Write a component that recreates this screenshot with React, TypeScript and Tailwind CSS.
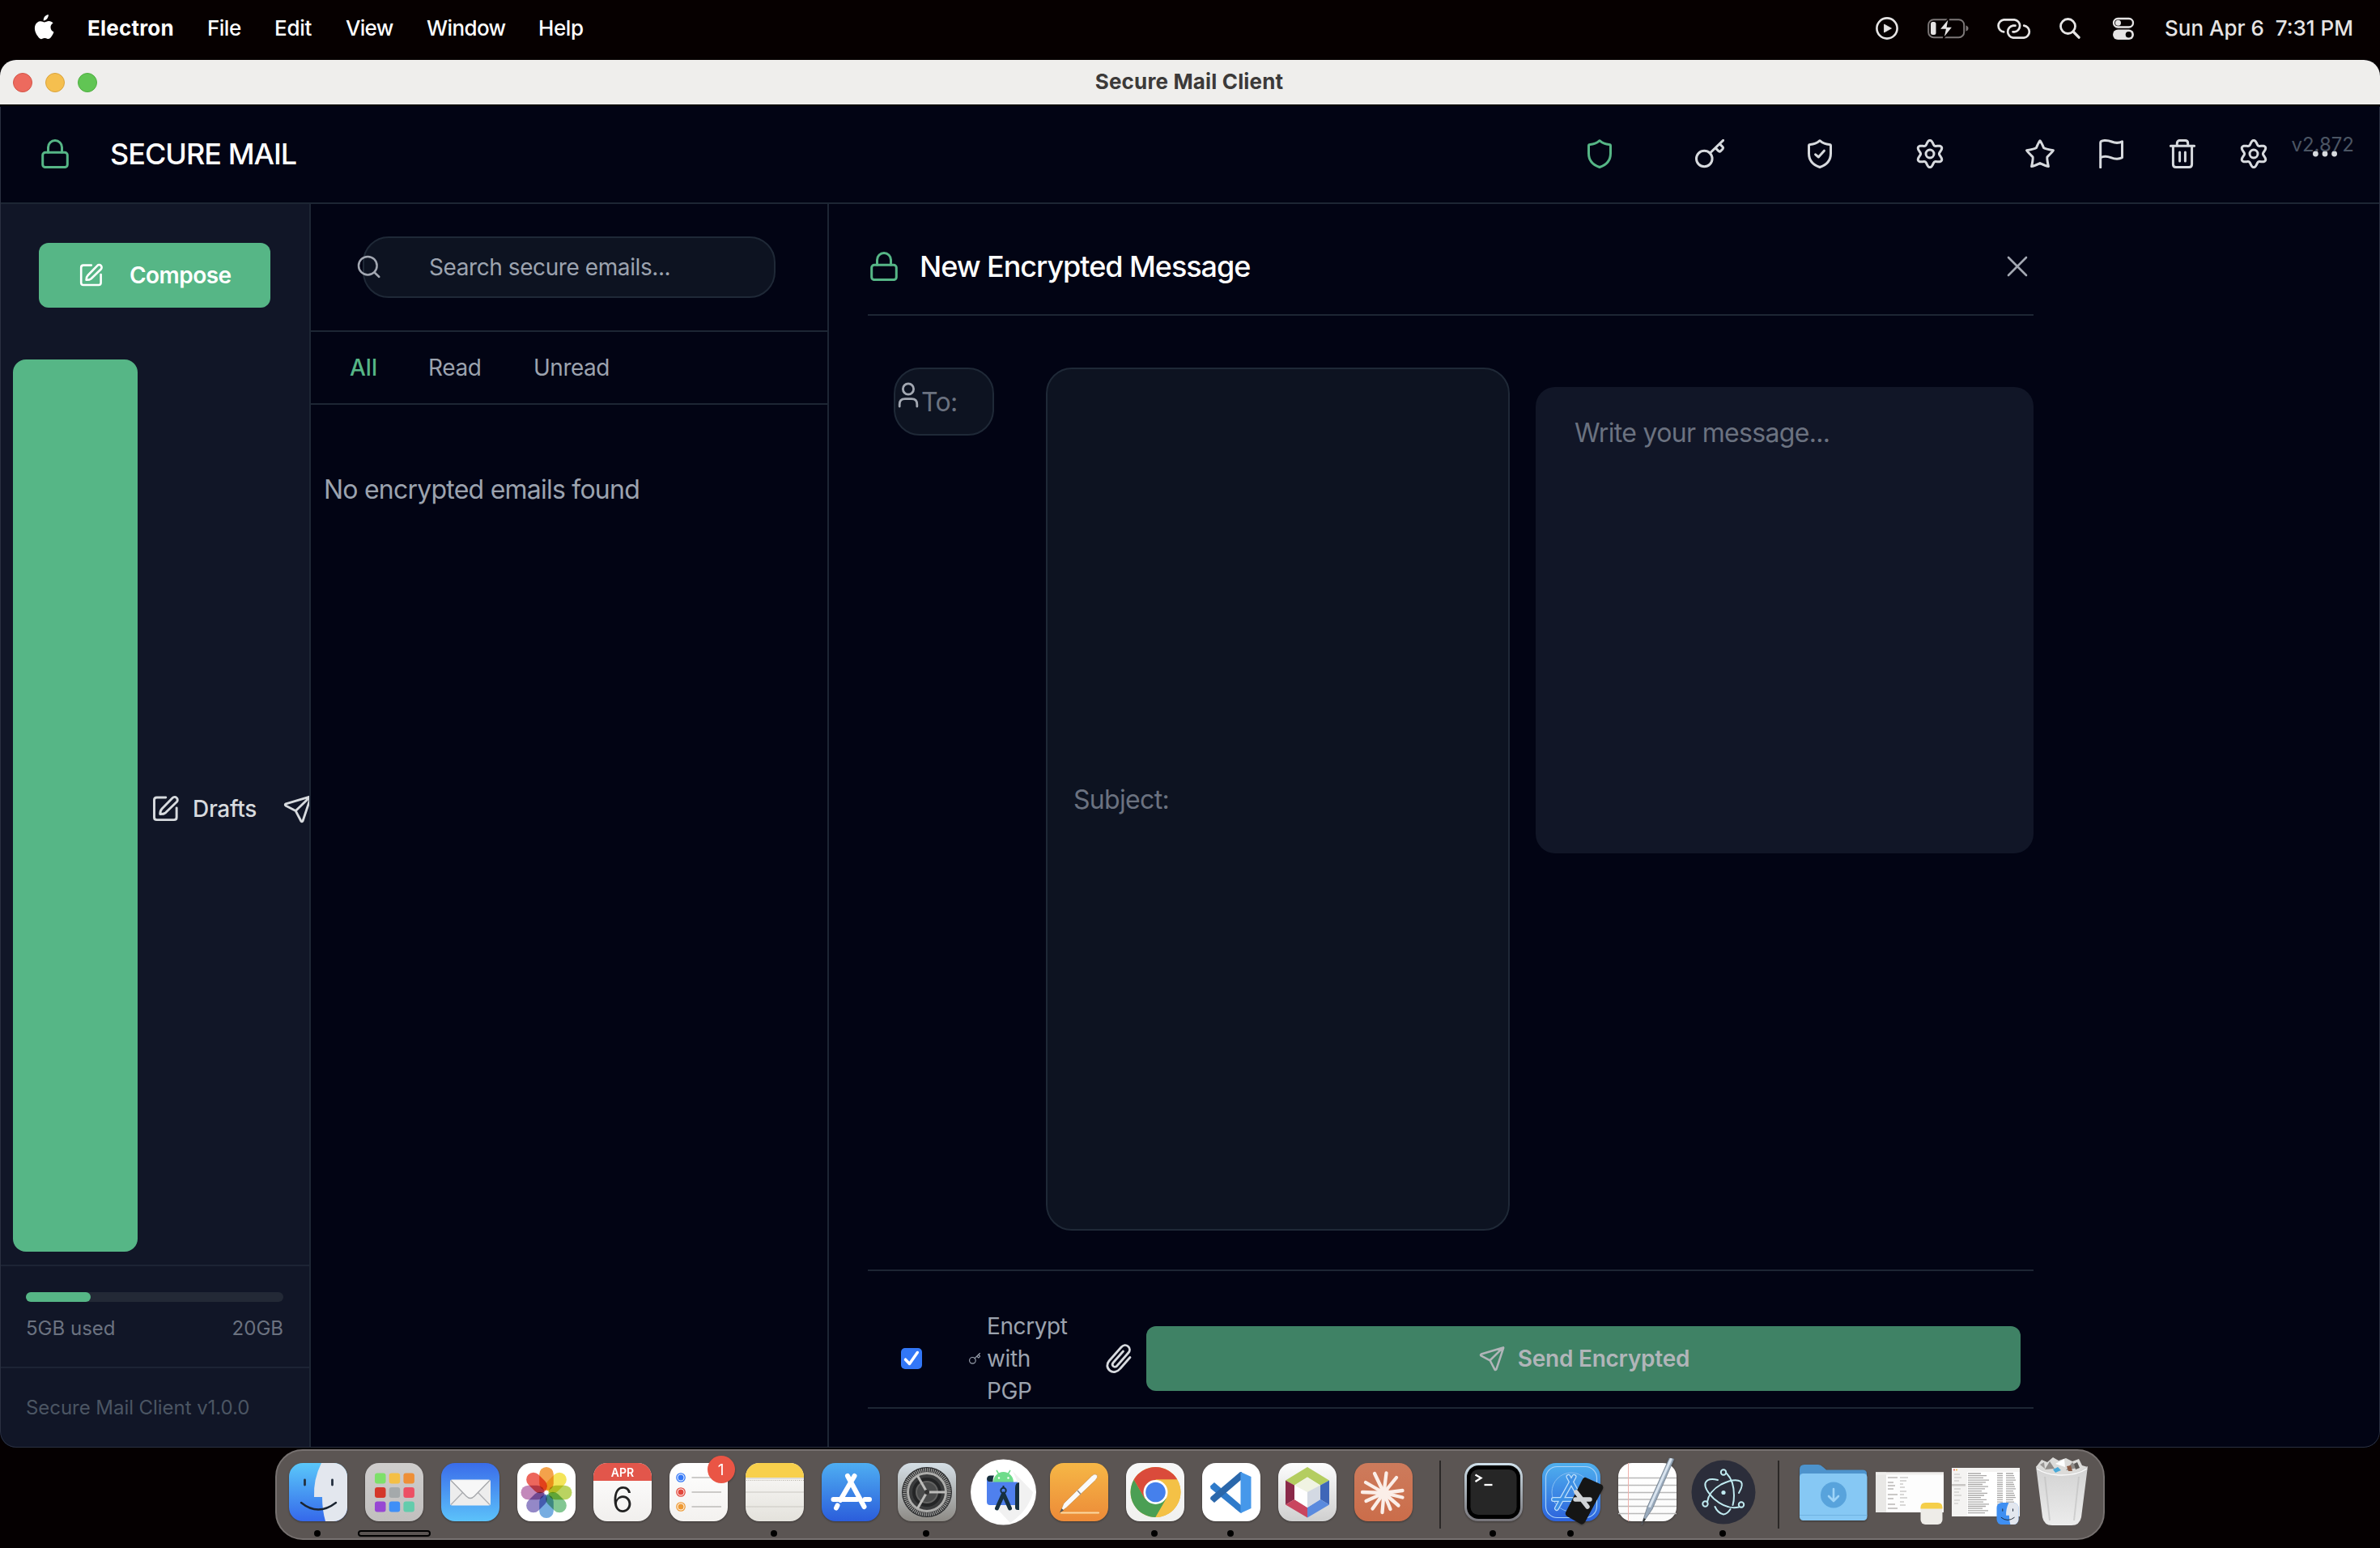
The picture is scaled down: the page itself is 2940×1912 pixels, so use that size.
import React from "react";

type Glyph = { className?: string };

const Icon = ({ size, box, w = 3, className = "", children }: { size?: string; box: string; w?: number; className?: string; children: React.ReactNode }) => (
  <svg viewBox={box} fill="none" stroke="currentColor" strokeWidth={w} strokeLinecap="round" strokeLinejoin="round" className={`shrink-0 ${size ?? "size-9"} ${className}`}>
    {children}
  </svg>
);

const SHIELD = "M18 1.7C14.5 4.8 11 6.4 6.2 6.4Q4.5 6.4 4.5 8V17.5C4.5 26 9 31.5 18 34.5C27 31.5 31.5 26 31.5 17.5V8Q31.5 6.4 29.8 6.4C25 6.4 21.5 4.8 18 1.7Z";

const Lock = ({ className }: Glyph) => (
  <Icon box="0 0 36 36" className={className}>
    <rect x="2.7" y="16.2" width="30.6" height="18.4" rx="3.4" />
    <path d="M9.5 16V10a8.5 8.5 0 0 1 17 0V16" />
  </Icon>
);
const Shield = ({ className }: Glyph) => (
  <Icon box="0 0 36 36" className={className}><path d={SHIELD} /></Icon>
);
const ShieldCheck = () => (
  <Icon box="0 0 36 36"><path d={SHIELD} /><path d="M12.6 18.8L16.4 22L23.4 14.2" /></Icon>
);
const Key = ({ size }: { size?: string }) => (
  <Icon box="0 0 36 36" size={size}>
    <circle cx="11.3" cy="24" r="9.8" />
    <path d="M18.4 17L34.6 1.3M25.3 10.9L29 14.6Q30.3 15.6 31.5 14.6L34 11.9Q35 10.5 33.9 9.4L30.4 5.8" />
  </Icon>
);
const gearPath =
  Array.from({ length: 120 }, (_, i) => {
    const t = (i / 120) * Math.PI * 2;
    const r = 13.9 + 2.6 * Math.cos(6 * t) + 0.15 * Math.cos(12 * t);
    return `${i ? "L" : "M"}${(18 + r * Math.sin(t)).toFixed(2)} ${(18 - r * Math.cos(t)).toFixed(2)}`;
  }).join("") + "Z";
const Gear = () => (
  <Icon box="0 0 36 36"><path d={gearPath} /><circle cx="18" cy="18" r="5" /></Icon>
);
const Star = () => (
  <Icon box="0 0 36 36">
    <path d="M18 1.8Q19.5 3.5 22.6 10.6Q24 11.8 34.4 13.8Q33 16 27 21.8Q26.3 23.5 28.4 33.6Q26 33.4 18 29.6Q10 33.4 7.6 33.6Q9.7 23.5 9 21.8Q3 16 1.6 13.8Q12 11.8 13.4 10.6Q16.5 3.5 18 1.8Z" />
  </Icon>
);
const Flag = () => (
  <Icon box="0 0 36 36">
    <path d="M4.7 34.8V4.2C4.7 1 13 .8 18.5 3C23.5 5 28 4.6 31.5 2.8V22.6C26.5 25.4 21.5 24.2 17.5 22.6C12.5 20.6 8 20.8 4.7 22.8" />
  </Icon>
);
const Trash = () => (
  <Icon box="0 0 36 36">
    <path d="M3.4 8.2H32.6M11.3 8.2V5Q11.3 1.6 14.7 1.6H21.3Q24.7 1.6 24.7 5V8.2M6.4 8.2V31Q6.4 34.5 9.9 34.5H26.1Q29.6 34.5 29.6 31V8.2M14.6 16V27M21.4 16V27" />
  </Icon>
);
const Dots = () => (
  <svg viewBox="0 0 36 36" className="size-9" fill="currentColor">
    <circle cx="6.4" cy="18" r="3.4" /><circle cx="18" cy="18" r="3.4" /><circle cx="29.6" cy="18" r="3.4" />
  </svg>
);
const Edit = ({ size, w = 2.6 }: { size: string; w?: number }) => (
  <Icon box="0 0 30 30" size={size} w={w}>
    <path d="M14.8 2.6H5Q2.2 2.6 2.2 5.4V24.2Q2.2 27 5 27H23.8Q26.6 27 26.6 24.2V14" />
    <path d="M8.6 20.8Q8.6 17 10.6 15L22.2 3.1a3.1 3.1 0 0 1 4.5 4.4L14.6 19.2Q12.6 20.9 8.6 20.8Z" />
  </Icon>
);
const Send = ({ size, w = 2.7 }: { size: string; w?: number }) => (
  <Icon box="0 0 34 34" size={size} w={w}>
    <path d="M31.6 2.6L3 11.2Q1.2 12.2 3 13.4L14.4 19.4L20.6 31.2Q21.8 32.8 22.8 31L32 3.4Q32.3 2.3 31.6 2.6ZM14.4 19.4L31.4 2.8" />
  </Icon>
);

function MenuBar() {
  return (
    <div className="flex h-[74px] items-center bg-[#060000] pb-[4px] text-[26px] text-white">
      <svg viewBox="0 0 26 31" className="ml-[42px] h-[31px] w-[26px] -mt-[3px]" fill="#fff">
        <path d="M17.8 0c.2 2-.6 3.800-1.700 5.200-1.100 1.300-2.800 2.300-4.400 2.200-.2-1.900.7-3.900 1.700-5.100C14.500 1 16.400.1 17.800 0zM23.600 10.600c-2 1.200-3.100 2.900-3.100 5.200 0 2.600 1.500 4.600 4 5.600-.6 1.900-1.500 3.700-2.700 5.400-1.100 1.600-2.300 3.300-4.100 3.300-1.800 0-2.300-1.100-4.400-1.100-2.100 0-2.700 1.100-4.400 1.200-1.800.1-3.100-1.700-4.200-3.400C1.500 22.500 0 17.300 1.500 13.200c1-3 3.700-5 6.600-5 1.900 0 3.300 1.200 5 1.200 1.600 0 2.900-1.300 5.200-1.300 2 0 4.100 1 5.300 2.500z" />
      </svg>
      <div className="-mt-[2px] ml-[40px] flex">
        <span className="w-[148px] font-bold tracking-[0.2px]">Electron</span>
        <span className="w-[83px] font-medium tracking-[-0.5px]">File</span>
        <span className="w-[88px] font-medium tracking-[-0.3px]">Edit</span>
        <span className="w-[100px] font-medium tracking-[-0.7px]">View</span>
        <span className="w-[138px] font-medium tracking-[-0.6px]">Window</span>
        <span className="font-medium tracking-[-0.4px]">Help</span>
      </div>
      <div className="ml-auto mr-[33px] flex items-center text-[#e6e4e4]">
        <svg viewBox="0 0 28 28" className="mr-[36px] size-7" fill="none" stroke="currentColor" strokeWidth="2.600">
          <circle cx="14" cy="14" r="12.600" /><path d="M10.500 9V19L19.500 14Z" fill="currentColor" strokeWidth="0.800" strokeLinejoin="round" />
        </svg>
        <svg viewBox="0 0 51 26" className="mr-[34px] h-[26px] w-[51px]" fill="none">
          <rect x="1.200" y="2.200" width="44" height="22" rx="6.500" stroke="#7c7777" strokeWidth="2" />
          <path d="M47.500 9.500V16.500Q50.500 15.500 50.500 13Q50.500 10.500 47.500 9.500Z" fill="#7c7777" />
          <rect x="4" y="5" width="6.500" height="16" rx="2.500" fill="#e6e4e4" />
          <path d="M26.500 0L14.500 14.500H22L19.500 26L31.500 11H24.500Z" fill="#e6e4e4" stroke="#060000" strokeWidth="1.500" />
        </svg>
        <svg viewBox="0 0 43 25" className="mr-[35px] h-[25px] w-[43px]" fill="none" stroke="currentColor" strokeWidth="2.700" strokeLinecap="round">
          <path d="M9.200 16.300A7.500 7.500 0 0 1 9.200 1.400H22.500A7.500 7.500 0 0 1 22.500 16.300H20.500" />
          <path d="M34.200 8.700A7.500 7.500 0 0 1 34.200 23.600H20.800A7.500 7.500 0 0 1 20.800 8.700H23.500" />
        </svg>
        <svg viewBox="0 0 26 26" className="mr-[39px] size-[26px]" fill="none" stroke="currentColor" strokeWidth="2.800" strokeLinecap="round">
          <circle cx="10.500" cy="10.500" r="9" /><path d="M17 17L24 24.200" strokeWidth="3.300" />
        </svg>
        <svg viewBox="0 0 28 28" className="mr-[37px] size-7" fill="none">
          <rect x="2" y="2" width="24" height="10.500" rx="5.200" stroke="currentColor" strokeWidth="2.300" />
          <circle cx="7.500" cy="7.200" r="3.500" fill="currentColor" />
          <rect x="1" y="15.500" width="26" height="12.500" rx="6.200" fill="currentColor" />
          <circle cx="20.500" cy="21.700" r="3.800" fill="#060000" />
        </svg>
        <span className="-mt-[2px] whitespace-pre font-medium">Sun Apr 6  7:31 PM</span>
      </div>
    </div>
  );
}

function Header() {
  return (
    <div className="relative flex h-[121px] items-center border-b-2 border-[#1d2634] pb-[2px] pl-[50px] pr-[24px] text-[#d7dade]">
      <Lock className="text-[#56b686]" />
      <h1 className="ml-[50px] text-[36px] font-medium tracking-[-1px] text-white">SECURE MAIL</h1>
      <div className="ml-auto flex">
        <div className="mr-6 flex">
          <div className="flex w-[136px] justify-center"><Shield className="text-[#56b686]" /></div>
          <div className="flex w-[136px] justify-center"><Key /></div>
          <div className="flex w-[136px] justify-center"><ShieldCheck /></div>
          <div className="flex w-[136px] justify-center"><Gear /></div>
        </div>
        {[Star, Flag, Trash, Gear, Dots].map((G, i) => (
          <div key={i} className="flex w-[88px] justify-center"><G /></div>
        ))}
      </div>
      <span className="absolute right-[32px] top-[32px] text-[24px] leading-8 text-[#4b5563]">v2.872</span>
    </div>
  );
}

function Sidebar() {
  return (
    <aside className="flex w-[384px] shrink-0 flex-col overflow-hidden border-r-2 border-[#1d2634] bg-[#111627]">
      <div className="px-[48px] pt-[48px]">
        <button className="flex h-[80px] w-[286px] items-center rounded-[12px] bg-[#56b686] pl-[50px] text-[28px] font-semibold text-white">
          <Edit size="size-[30px]" />
          <span className="ml-[32px] tracking-[-0.55px]">Compose</span>
        </button>
      </div>
      <nav className="mt-[64px] flex h-[1102px] items-center px-[16px] text-[28px] font-medium text-[#d7dade]">
        <div className="h-full w-[154px] shrink-0 rounded-[16px] bg-[#56b686]" />
        <div className="ml-[18px] flex shrink-0 items-center pt-[8px]">
          <Edit size="size-[34px]" />
          <span className="ml-[16px] w-[96px] tracking-[-0.3px]">Drafts</span>
        </div>
        <div className="ml-[16px] flex shrink-0 pt-[8px]"><Send size="size-[36px]" /></div>
      </nav>
      <div className="mt-[16px] h-[126px] border-t-2 border-[#1d2435] px-[32px] pt-[32px]">
        <div className="h-[12px] w-[318px] rounded-full bg-[#232936]">
          <div className="h-full w-1/4 rounded-full bg-[#56b686]" />
        </div>
        <div className="mt-[17px] flex w-[318px] justify-between text-[24px] leading-8 text-[#6b7280]">
          <span>5GB used</span>
          <span>20GB</span>
        </div>
      </div>
      <div className="flex flex-1 items-center border-t-2 border-[#1d2435] px-[32px] text-[24px] tracking-[-0.05px] text-[#4b5563]">Secure Mail Client v1.0.0</div>
    </aside>
  );
}

function MailList() {
  return (
    <section className="flex w-[640px] shrink-0 flex-col border-r-2 border-[#1d2634] text-[28px]">
      <div className="h-[158px] border-b-2 border-[#1d2634] pl-[64px] pt-[40px]">
        <div className="relative flex h-[76px] w-[510px] items-center rounded-[32px] border-2 border-[#1f2937] bg-[#0d1321] pl-[80px] tracking-[-0.42px] text-[#9ca3af]">
          <Icon box="0 0 30 30" size="size-[30px]" w={2.5} className="absolute -left-[9px] top-[21px] text-[#a3a8b2]">
            <circle cx="13.300" cy="13.200" r="11.300" /><path d="M21.600 21.500L27.300 27" />
          </Icon>
          Search secure emails...
        </div>
      </div>
      <div className="flex h-[90px] items-center border-b-2 border-[#1d2634] pl-[48px] text-[#9ca3af]">
        <span className="w-[97px] font-medium text-[#56b686]">All</span>
        <span className="w-[130px] tracking-[-0.4px]">Read</span>
        <span className="tracking-[-0.5px]">Unread</span>
      </div>
      <p className="ml-[16px] mt-[81px] text-[32px] leading-[48px] tracking-[-0.77px] text-[#9ca3af]">No encrypted emails found</p>
    </section>
  );
}

function Composer() {
  return (
    <main className="flex w-[1488px] flex-col pl-[48px] text-[32px] tracking-[-0.67px] text-[#6b7280]">
      <div className="flex h-[138px] items-center border-b-2 border-[#1d2634] pt-[17px] text-white">
        <Lock className="ml-[2px] text-[#56b686]" />
        <h2 className="ml-[26px] text-[36px] font-medium tracking-[-1.05px]">New Encrypted Message</h2>
        <Icon box="0 0 28 28" size="size-7" w={2.6} className="ml-auto mr-[6px] text-[#a3a8b2]"><path d="M3 3L25 25M25 3L3 25" /></Icon>
      </div>
      <div className="flex h-[1178px] items-start pl-[32px] pt-[64px]">
        <div className="relative flex h-[84px] w-[124px] items-center rounded-[32px] border-2 border-[#1f2937] bg-[#0d1321] pl-[32px] pt-[2px]">
          <Icon box="0 0 28 34" size="h-[34px] w-[28px]" w={2.8} className="absolute left-[2px] top-[15px] text-[#a3a8b2]">
            <circle cx="14" cy="9.500" r="6.600" />
            <path d="M3.200 31V28.500Q3.200 21.700 10 21.700H18Q24.800 21.700 24.800 28.500V31" />
          </Icon>
          To:
        </div>
        <div className="ml-[64px] flex h-[1066px] w-[573px] items-center rounded-[32px] border-2 border-[#1f2937] bg-[#0d1321] pl-[32px] pt-[2px]">Subject:</div>
        <div className="ml-[32px] mt-[24px] h-[576px] w-[615px] rounded-[24px] bg-[#111627] pl-[48px] pt-[33px] leading-[48px]">Write your message...</div>
      </div>
      <div className="flex h-[172px] items-center border-y-2 border-[#1d2634] pl-[41px] pt-[48px] text-[28px] text-[#9ca3af]">
        <svg viewBox="0 0 26 26" className="size-[26px]"><rect width="26" height="26" rx="5" fill="#3277f7" /><path d="M5.500 14.200L10.500 19.500L20.300 5.500" fill="none" stroke="#fff" strokeWidth="3.500" strokeLinecap="round" strokeLinejoin="round" /></svg>
        <div className="ml-[58px] flex w-[130px] items-center">
          <Key size="size-[14px]" />
          <span className="ml-[8px] w-[104px] leading-[40px] tracking-[-0.4px]">Encrypt with PGP</span>
        </div>
        <Icon box="0 0 34 38" size="h-[38px] w-[34px]" w={2.8} className="ml-[38px] text-[#d7dade]">
          <path d="M31 17.500L18.700 31.500C15.500 35.500 10 37 6 33.800C1.800 30.300 2 25.500 5 22L20 5C22.500 2.200 26 1.700 28.600 4C31.200 6.300 31 9.500 28.800 12L14.800 28C13.500 29.500 11.500 29.600 10.200 28.500C8.900 27.300 8.900 25.500 10.200 24L22.500 10" />
        </Icon>
        <button className="ml-[17px] flex h-[80px] w-[1080px] items-center justify-center gap-[16px] rounded-[12px] bg-[#3f8265] pl-[2px] font-semibold text-[#b1b5b9]">
          <Send size="size-[32px]" />
          <span className="tracking-[-0.25px]">Send Encrypted</span>
        </button>
      </div>
    </main>
  );
}

const Grad = ({ id, a, b }: { id: string; a: string; b: string }) => (
  <linearGradient id={id} x1="0" y1="0" x2="0" y2="1"><stop stopColor={a} /><stop offset="1" stopColor={b} /></linearGradient>
);

function App72({ id, a, b, dot, children }: { id: string; a: string; b: string; dot?: boolean; children: React.ReactNode }) {
  return (
    <div className="relative size-[72px] shrink-0">
      <svg viewBox="0 0 72 72" className="size-[72px] overflow-visible drop-shadow-[0_1px_1px_rgba(0,0,0,0.35)]">
        <defs><Grad id={id} a={a} b={b} /></defs>
        <rect width="72" height="72" rx="17" fill={`url(#${id})`} />
        {children}
      </svg>
      {dot && <Dot />}
    </div>
  );
}
const Dot = () => <i className="absolute left-[31px] top-[83px] size-[8px] rounded-full bg-black" />;

const petals = ["#f2922b", "#f2df3c", "#aecb45", "#6dbd7f", "#5f9fdc", "#8173bd", "#b873ae", "#ea4b40"];
const padColors = ["#7ee06a", "#f4bf45", "#ee8f37", "#d4372a", "#a4a9ab", "#ec5064", "#9747d3", "#3f8ff7", "#63ccac"];

const FinderArt = () => (
  <>
    <path d="M40 0H55A17 17 0 0 1 72 17V55A17 17 0 0 1 55 72H45Q41 58 41 42H31Q30 20 40 0Z" fill="#e3e7ee" />
    <path d="M19.500 21V27M53.500 21V27" stroke="#24303f" strokeWidth="2.800" strokeLinecap="round" />
    <path d="M15 49Q36 66 58 49" fill="none" stroke="#1a2430" strokeWidth="2.400" strokeLinecap="round" />
  </>
);

function Dock() {
  return (
    <div className="absolute left-[340px] top-[1790px] flex h-[112px] w-[2260px] items-start rounded-[34px] border-2 border-[#777170] bg-[#5b5553] pl-[15px] pt-[15px]">
      <div className="flex gap-[22px]">
        <App72 id="finder" a="#5ac8fa" b="#3568ea" dot><FinderArt /></App72>
        <div className="relative">
          <App72 id="pad" a="#cfcdcc" b="#c1bfbe">
            {padColors.map((c, i) => (
              <rect key={i} x={12 + (i % 3) * 17.700} y={12.500 + Math.floor(i / 3) * 17.500} width="13.500" height="13" rx="3" fill={c} />
            ))}
          </App72>
          <i className="absolute -left-[9px] top-[83px] h-[8px] w-[90px] rounded-[4px] border-2 border-black" />
        </div>
        <App72 id="mail" a="#3a6cea" b="#5cc2fa">
          <rect x="11" y="20.500" width="50" height="32" rx="2.500" fill="#ededed" />
          <path d="M12 51.500L27 36M60 51.500L45 36" stroke="#aeb0b4" strokeWidth="1.300" />
          <path d="M12 21.500L31 41Q36 46 41 41L60 21.500" fill="#f7f7f7" stroke="#a4a6aa" strokeWidth="1.300" />
        </App72>
        <App72 id="photos" a="#ffffff" b="#ffffff">
          {petals.map((c, i) => (
            <rect key={c} x="27.200" y="5" width="17.600" height="29" rx="8.800" fill={c} fillOpacity="0.850" transform={`rotate(${i * 45} 36 36.500)`} className="mix-blend-multiply" />
          ))}
          <circle cx="36" cy="36.500" r="1.500" fill="#fff" />
        </App72>
        <App72 id="cal" a="#ffffff" b="#f1efed">
          <path d="M0 22V17A17 17 0 0 1 17 0H55A17 17 0 0 1 72 17V22Z" fill="#e2564b" />
          <text x="36" y="17" textAnchor="middle" fontSize="14" fontWeight="600" fill="#fff" fontFamily="Inter, sans-serif">APR</text>
          <text x="36" y="60.500" textAnchor="middle" fontSize="44" fontWeight="300" fill="#222" fontFamily="Inter, sans-serif">6</text>
        </App72>
        <App72 id="rem" a="#ffffff" b="#f3f1ef">
          {["#3478f6", "#e2483c", "#ee9a34"].map((c, i) => (
            <g key={c}>
              <circle cx="14" cy={18 + i * 18} r="5.200" fill="#fff" stroke={c} strokeWidth="1.300" />
              <circle cx="14" cy={18 + i * 18} r="3.500" fill={c} />
              <path d={`M27.500 ${18 + i * 18}H64`} stroke="#bdbbb9" strokeWidth="1.400" />
            </g>
          ))}
          <circle cx="64" cy="8" r="17" fill="#ea5545" />
          <text x="63.500" y="15" textAnchor="middle" fontSize="19" fill="#fff" fontFamily="Inter, sans-serif">1</text>
        </App72>
        <App72 id="notes" a="#fcfbfa" b="#e4e2dc" dot>
          <path d="M0 18V17A17 17 0 0 1 17 0H55A17 17 0 0 1 72 17V18Z" fill="#f8d04c" />
          <path d="M1 21.500H72" stroke="#b5b0a5" strokeDasharray="1 1.500" />
          <path d="M0 19H72M0 36H72M0 54H72" stroke="#c9c7c2" strokeWidth="1.200" />
        </App72>
        <App72 id="store" a="#4eaef2" b="#2b5ddb">
          <path d="M40.500 16L23 46M32 16L52.500 54M14.500 45H44M53.500 45H59M19.500 52.500L18 55.500" stroke="#fff" strokeWidth="6" strokeLinecap="round" />
        </App72>
        <App72 id="sett" a="#d5dfe6" b="#8d8a85" dot>
          <circle cx="36" cy="36" r="31" fill="#2b2c2e" />
          <circle cx="36" cy="36" r="27.500" fill="none" stroke="#a2a2a0" strokeWidth="4.500" strokeDasharray="1.200 1.200" />
          <circle cx="36" cy="36" r="23.500" fill="#3a3b3c" stroke="#adadab" strokeWidth="3" />
          <circle cx="36" cy="36" r="16" fill="#626261" stroke="#242526" strokeWidth="4" />
          <circle cx="36" cy="36" r="12" fill="#4a4b4b" />
          <path d="M36 36H59M36 36L24.500 16M36 36L24.500 56" stroke="#bcbcba" strokeWidth="3" />
          <circle cx="36" cy="36" r="3" fill="#333" />
        </App72>
        <div className="relative size-[72px]">
          <svg viewBox="0 0 72 72" className="size-[72px] overflow-visible">
            <circle cx="36.500" cy="36" r="40.500" fill="#fff" />
            <path d="M48 10L73 36Q68 58 45 74L30 58L54 24Z" fill="#f1f1f1" />
            <path d="M24 24A12.500 13 0 0 1 49 24Z" fill="#6fdc8b" />
            <path d="M28 9L31 14M45 9L42 14" stroke="#6fdc8b" strokeWidth="1.500" />
            <circle cx="31" cy="18.500" r="1.200" fill="#fff" /><circle cx="42.500" cy="18.500" r="1.200" fill="#fff" />
            <path d="M16 20Q16 15.500 20.500 15.500H25Q23.500 18 23.500 23.500H16Z" fill="#17303f" />
            <path d="M16 20Q17 23.500 21 23.500H54V52H20Q16 52 16 48Z" fill="#4f80ee" />
            <path d="M51 31Q51 24 56 24V58H54Q51 58 51 55Z" fill="#17303f" />
            <path d="M36.500 38L28.500 56M36.500 38L44.500 56" stroke="#17303f" strokeWidth="5" strokeLinecap="round" />
            <circle cx="36.500" cy="34" r="3.200" fill="none" stroke="#17303f" strokeWidth="2" /><path d="M36.500 28V31" stroke="#17303f" strokeWidth="2" />
          </svg>
        </div>
        <App72 id="pages" a="#f6b746" b="#ec8a38">
          <path d="M14 61.500H60" stroke="#fbd9a2" strokeWidth="2.200" strokeLinecap="round" />
          <path d="M12.500 61L17 50L51.500 16Q55 12.500 58 14.500Q60 17 56.500 21L20.500 55Z" fill="#fafafa" stroke="#c08436" strokeWidth=".6" />
          <path d="M34 34L38 38.500" stroke="#888" strokeWidth="1.500" /><path d="M12 61.500L14.500 56L17 58.500Z" fill="#555" />
        </App72>
        <App72 id="chrome" a="#f8f8f8" b="#f0f0ef" dot>
          <circle cx="36.500" cy="36" r="31" fill="#e2b53c" />
          <path d="M36.500 36L9.700 20.500A31 31 0 0 1 63.300 20.500L36.500 20.500Z" fill="#da4b3b" />
          <path d="M9.700 20.500A31 31 0 0 0 36.500 67L49.900 43.700L36.500 36L23.100 43.700Z" fill="#4b9f54" />
          <path d="M36.500 67A31 31 0 0 0 63.300 20.500H36.500L49.900 43.700Z" fill="#f4c146" />
          <path d="M9.700 20.500L23.100 43.700L36.500 20.500Z" fill="#da4b3b" />
          <circle cx="36.500" cy="36" r="15" fill="#fff" /><circle cx="36.500" cy="36" r="12.300" fill="#4580ec" />
        </App72>
        <App72 id="code" a="#ffffff" b="#ffffff" dot>
          <path d="M10 28.500L15 24L49 53V61.500L47 61.500L10.500 31.500Z" fill="#2f7bcb" />
          <path d="M10 44.500L15 49L49 20V11L47 11L10.500 42Z" fill="#2a67ab" />
          <path d="M47.500 11L60.500 17V56L47.500 62Z" fill="#4698ea" />
        </App72>
        <App72 id="beans" a="#fdfdfd" b="#cfcfcf">
          <path d="M36 5L63 21.500L52 27.500L36 17.500L20 27.500L9 21.500Z" fill="#b4cd60" />
          <path d="M9 21.500L20 27.500V45L9 51.500Z" fill="#8a2a49" /><path d="M9 51.500L20 45L36 55V67.500Z" fill="#c9455f" />
          <path d="M63 21.500L52 27.500V45L63 51.500Z" fill="#3f66b8" /><path d="M63 51.500L52 45L36 55V67.500Z" fill="#5a8ade" />
          <path d="M36 17.500L52 27.500L36 36L20 27.500Z" fill="#f0f3e2" /><path d="M20 27.500L36 36V55L20 45Z" fill="#fff" /><path d="M52 27.500L36 36V55L52 45Z" fill="#d3d9e3" />
        </App72>
        <App72 id="burst" a="#cd7b5c" b="#cb6d4a">
          {[[25, 13], [39.500, 12.500], [52, 18], [59.500, 34], [59.500, 42.500], [54.500, 52.500], [44.500, 57], [34.500, 61], [22.500, 56.500], [14.500, 47], [10, 36], [14, 24]].map(([x, y], i) => (
            <path key={i} d={`M36.500 37L${x} ${y}`} stroke="#fbeee8" strokeWidth="4.300" strokeLinecap="round" />
          ))}
          <circle cx="36.500" cy="37" r="7" fill="#fbeee8" />
        </App72>
      </div>
      <div className="-mt-[3px] ml-[33px] h-[84px] w-[2px] bg-[#2b2827]" />
      <div className="ml-[29px] flex">
        <App72 id="term" a="#cfe0ea" b="#77757a" dot>
          <rect x="3" y="3" width="66" height="66" rx="14.500" fill="#000" />
          <rect x="7.500" y="8" width="57" height="56" rx="9.500" fill="#262626" />
          <path d="M13.500 14.500L20.500 18.500L13.500 23" fill="none" stroke="#fff" strokeWidth="2.300" /><path d="M24.500 27H34.500" stroke="#fff" strokeWidth="2.300" />
        </App72>
        <div className="ml-[24px] flex gap-[22px]">
          <App72 id="sim" a="#4fb0ee" b="#2c62dc" dot>
            <rect x="4.500" y="4.500" width="63" height="63" rx="14" fill="none" stroke="#a9d2f7" strokeWidth="1.200" />
            <circle cx="36" cy="36" r="24" fill="none" stroke="#86bdf2" strokeWidth="1" />
            <path d="M39.500 17L18 56M32.500 17L54 56M14 45H60" stroke="#bfe0fb" strokeWidth="6" strokeLinecap="round" />
            <path d="M39.500 17L18 56M32.500 17L54 56M14 45H60" stroke="#3d8fe4" strokeWidth="3.600" strokeLinecap="round" />
            <path d="M54 18L74 27Q76 29 75 32L53 73Q50 77 47 75L31 66Q28 64 29 61L50 20Q52 17 54 18Z" fill="#151515" />
            <path d="M42 36L56 54M41 45H59" stroke="#d0d3d6" strokeWidth="5.500" strokeLinecap="round" />
          </App72>
          <App72 id="text" a="#ffffff" b="#fbfbfb">
            <path d="M0 18.500H72M0 27.500H72M0 36.500H72M0 45H72M0 53.500H72M0 62.500H72" stroke="#b9b9b9" strokeWidth="1.500" />
            <path d="M12.500 0V72" stroke="#efb0ab" strokeWidth="1" />
            <path d="M63 -6L69 -5L42 57L29 76L36 54Z" fill="#9aabbd" stroke="#6d7a88" strokeWidth=".8" />
            <path d="M64 -6L67 -5.500L40 55L37 54.500Z" fill="#d9e4ef" /><path d="M29 76L31.500 68L34 69.500Z" fill="#333" />
          </App72>
          <div className="relative size-[72px]">
            <svg viewBox="0 0 72 72" className="size-[72px] overflow-visible" fill="none" stroke="#bfeaf0" strokeWidth="2" strokeLinecap="round">
              <circle cx="36" cy="36" r="39.500" fill="#2b2d3a" stroke="none" />
              <path d="M29 21Q16 18 13.500 25Q12 32 24 44Q40 58 55 54.500" /><path d="M16 48Q18 35 33 26.500Q50 18 57.500 23Q61 27 55 37" />
              <path d="M40 13Q49 22 49 40Q49 47 47.500 52" /><path d="M25.500 54Q29 62 36 63.500Q41 63 44.500 57" />
              <circle cx="36" cy="11.500" r="3.200" /><circle cx="13.500" cy="50.500" r="3.200" /><circle cx="58" cy="51.500" r="3.200" />
              <circle cx="36" cy="36.500" r="2.600" fill="#bfeaf0" stroke="none" />
            </svg>
            <Dot />
          </div>
        </div>
      </div>
      <div className="-mt-[3px] ml-[31px] h-[84px] w-[2px] bg-[#2b2827]" />
      <svg viewBox="0 0 84 72" className="ml-[25px] h-[72px] w-[84px] shrink-0 drop-shadow-[0_1px_1px_rgba(0,0,0,0.4)]">
        <path d="M0 8Q0 2 6 2H23Q26 2 29 5L33 8.500H78Q83 8.500 83 13V30H0Z" fill="#4d93cc" />
        <rect y="13" width="83.500" height="58" rx="4.500" fill="#86c8f4" />
        <path d="M0 64.500H83.500" stroke="#6fb3e2" strokeWidth="1.200" />
        <circle cx="42" cy="39.500" r="16" fill="#58a3dc" />
        <path d="M42 32V46M36 41L42 47L48 41" fill="none" stroke="#9ed4f8" strokeWidth="2.600" strokeLinecap="round" strokeLinejoin="round" />
      </svg>
      <svg viewBox="0 0 84 78" className="ml-[10px] h-[78px] w-[84px] shrink-0">
        <rect y="11.500" width="84" height="49.500" fill="#fdfdfd" />
        <rect y="11.500" width="13" height="49.500" fill="#e9e8e6" /><rect y="11.500" width="84" height="3" fill="#efeeec" />
        <path d="M15 18H27M15 24H22M15 28H24M15 32H22M15 39H27M15 44H22M15 51H24M15 56H27" stroke="#b9b7b5" strokeWidth="1.300" />
        <path d="M30 18H40M30 22H38M30 26H34M30 30H36M30 35H38M30 39H35M30 43H39M30 48H35M30 52H37" stroke="#b5b3b1" strokeWidth="1" />
        <rect x="55.500" y="49" width="27" height="27" rx="6" fill="#eeece8" /><path d="M55.500 56.500V55Q55.500 49 61.500 49H76.500Q82.500 49 82.500 55V56.500Z" fill="#f5cf4a" />
      </svg>
      <svg viewBox="0 0 84 78" className="ml-[10px] h-[78px] w-[84px] shrink-0">
        <rect y="6" width="84" height="60" fill="#f4f3f2" /><rect x="19" y="11" width="65" height="55" fill="#fff" /><rect y="26" width="17" height="2.500" fill="#c8c6c4" />
        {Array.from({ length: 19 }, (_, i) => (
          <path key={i} d={`M20 ${13 + i * 2.700}H${36 + ((i * 7) % 11)}M56 ${13 + i * 2.700}H63M67 ${13 + i * 2.700}H${76 + (i % 4)}`} stroke="#aaa9a8" strokeWidth="1.300" />
        ))}
        <path d="M3 14H10M3 18H12M3 22H9M3 32H11M3 36H9M3 40H12M3 46H10M3 50H8" stroke="#c3c1bf" strokeWidth="1" />
        <circle cx="3" cy="8.500" r="1" fill="#e5594d" /><circle cx="6" cy="8.500" r="1" fill="#f0b840" />
        <g transform="translate(55.500 49) scale(.375)">
          <rect width="72" height="72" rx="17" fill="#3f8ff2" /><FinderArt />
        </g>
      </svg>
      <svg viewBox="0 0 66 84" className="-mt-[7px] ml-[19px] h-[84px] w-[66px] shrink-0">
        <defs><Grad id="bin" a="#d2d2d2" b="#ececec" /></defs>
        <path d="M1 12L8 3L15 6L22 0L29 4L38 1L46 5L54 2L58 10L65 12L50 22H14Z" fill="#dcdbd9" />
        <path d="M12 15L18 5L24 14ZM38 16L46 6L52 13Z" fill="#8f8b88" /><path d="M22 15L28 12L32 16L25 19Z" fill="#49a9d8" /><path d="M39 11L44 10L46 17L41 17Z" fill="#8a5a44" /><path d="M25 8L36 2L37 12Z" fill="#fff" />
        <path d="M48 8L52 6L55 13L50 15Z" fill="#5a5755" /><path d="M6 9L11 6L12 14Z" fill="#9b9896" />
        <path d="M1 11Q14 21 33 21Q52 21 65 11L57 74Q55 84 45 84H21Q11 84 9 74Z" fill="url(#bin)" />
        <path d="M2 14Q14 22 33 22Q52 22 64 14" fill="none" stroke="#fafafa" strokeWidth="1.500" />
        <path d="M12 24L18 78M54 24L48 78" stroke="#bfbfbf" strokeWidth="2" opacity=".6" />
      </svg>
    </div>
  );
}

export default function App() {
  return (
    <div className="relative h-[1912px] w-[2940px] overflow-hidden bg-[#050001] font-['Inter',sans-serif] antialiased">
      <MenuBar />
      <div className="relative flex h-[1714px] flex-col overflow-hidden rounded-[20px] bg-[#020414]">
        <div className="flex h-[57px] shrink-0 items-center border-b-2 border-black bg-[#efeeec]">
          <div className="ml-[16px] flex w-[104px] gap-[16px]">
            <i className="size-6 rounded-full border border-[#d35548] bg-[#ed6a5e]" />
            <i className="size-6 rounded-full border border-[#d9a33c] bg-[#f5bf4f]" />
            <i className="size-6 rounded-full border border-[#4fae40] bg-[#61c554]" />
          </div>
          <span className="-mt-[2px] flex-1 pr-[122px] text-center text-[26px] font-bold tracking-[0.15px] text-[#3c3a39]">Secure Mail Client</span>
        </div>
        <Header />
        <div className="flex min-h-0 flex-1">
          <Sidebar />
          <MailList />
          <Composer />
        </div>
        <div className="pointer-events-none absolute inset-0 top-[58px] rounded-b-[20px] border-x border-b border-[#2a3040]" />
      </div>
      <Dock />
    </div>
  );
}
